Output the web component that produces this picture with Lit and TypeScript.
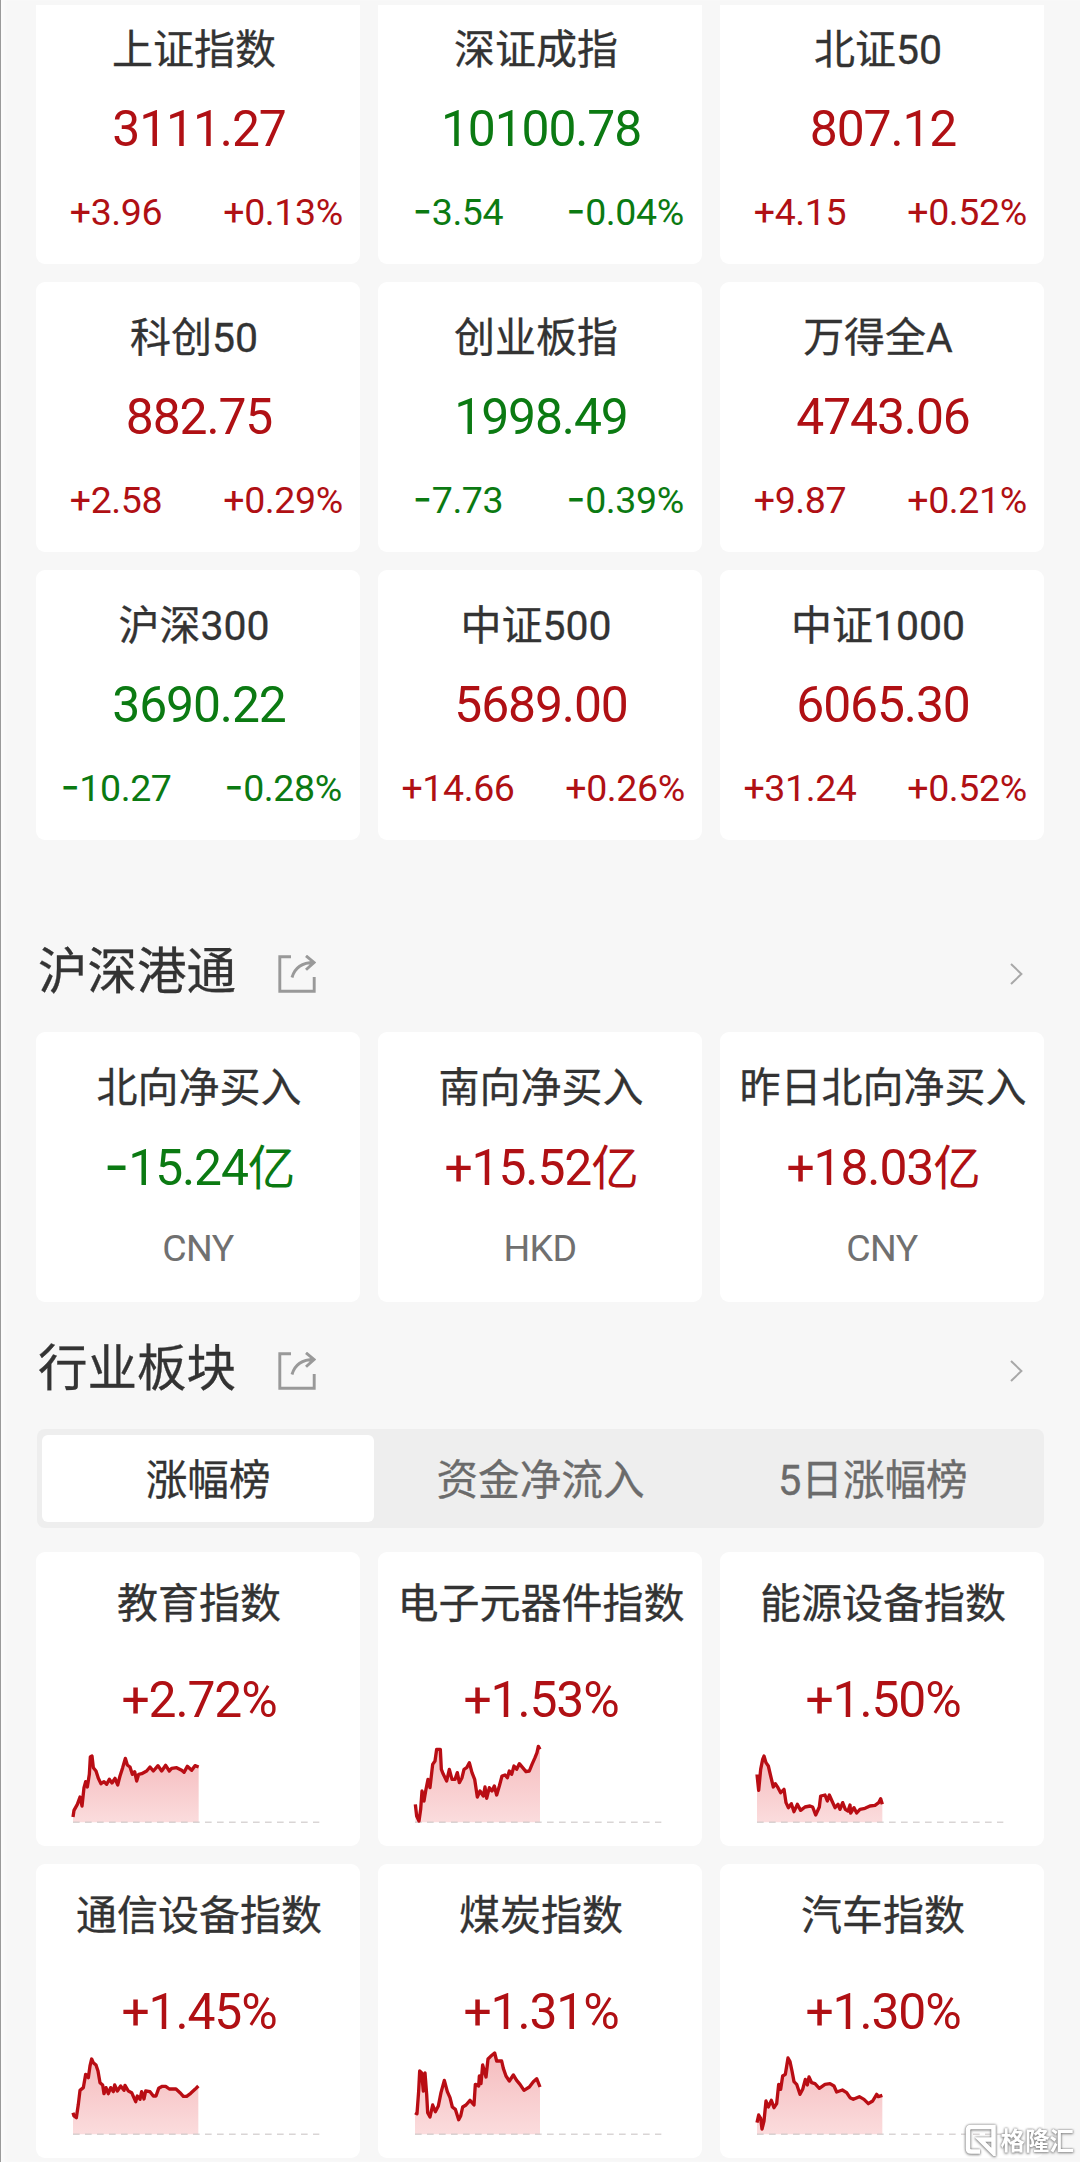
import { LitElement, html, svg, css } from "lit";
import { customElement, property } from "lit/decorators.js";

type Point = [number, number];

interface IndexQuote {
  name: string;
  value: string;
  change: string;
  percent: string;
  up: boolean;
}

interface Flow {
  name: string;
  value: string;
  currency: string;
}

interface Sector {
  name: string;
  percent: string;
  points: string;
}

const INDICES: IndexQuote[] = [
  { name: "上证指数", value: "3111.27", change: "+3.96", percent: "+0.13%", up: true },
  { name: "深证成指", value: "10100.78", change: "-3.54", percent: "-0.04%", up: false },
  { name: "北证50", value: "807.12", change: "+4.15", percent: "+0.52%", up: true },
  { name: "科创50", value: "882.75", change: "+2.58", percent: "+0.29%", up: true },
  { name: "创业板指", value: "1998.49", change: "-7.73", percent: "-0.39%", up: false },
  { name: "万得全A", value: "4743.06", change: "+9.87", percent: "+0.21%", up: true },
  { name: "沪深300", value: "3690.22", change: "-10.27", percent: "-0.28%", up: false },
  { name: "中证500", value: "5689.00", change: "+14.66", percent: "+0.26%", up: true },
  { name: "中证1000", value: "6065.30", change: "+31.24", percent: "+0.52%", up: true },
];

const FLOWS: Flow[] = [
  { name: "北向净买入", value: "-15.24亿", currency: "CNY" },
  { name: "南向净买入", value: "+15.52亿", currency: "HKD" },
  { name: "昨日北向净买入", value: "+18.03亿", currency: "CNY" },
];

// Sparkline samples, "x,y" in a 744 x 252 box whose zero line is at y = 244.
const SECTORS: Sector[] = [
  {
    name: "教育指数",
    percent: "+2.72%",
    points:
      "3,228 6,208 16,190 24,168 30,195 36,140 41,122 46,138 52,100 55,48 60,45 64,80 72,90 79,112 87,128 96,122 104,130 112,115 120,126 129,112 137,132 144,105 152,80 160,52 166,72 174,78 181,100 188,92 194,120 200,100 209,98 224,90 234,78 244,90 258,74 269,90 281,73 292,90 299,82 314,80 329,88 336,94 346,76 359,88 369,74 380,78",
  },
  {
    name: "电子元器件指数",
    percent: "+1.53%",
    points:
      "4,190 8,225 15,240 20,205 24,150 30,180 35,150 42,115 48,140 56,70 63,60 68,25 79,25 82,85 88,100 98,120 106,85 114,115 123,115 130,95 136,125 144,110 150,85 158,80 166,65 174,95 182,115 190,168 198,150 208,165 213,138 218,172 226,140 234,150 241,135 248,162 256,135 264,105 273,102 280,110 286,90 293,100 300,75 308,85 316,68 326,80 336,92 346,90 354,70 363,50 369,35 373,16 378,25",
  },
  {
    name: "能源设备指数",
    percent: "+1.50%",
    points:
      "3,100 8,148 14,85 20,55 24,45 30,65 37,75 44,105 52,138 58,128 66,140 74,155 84,145 90,185 97,200 106,188 114,212 124,190 134,208 147,198 162,195 170,198 179,222 190,198 194,165 207,162 214,180 220,162 228,180 237,200 246,190 252,205 260,185 268,205 276,210 282,192 284,216 294,200 302,216 312,205 327,202 342,195 357,193 368,185 374,173 379,190",
  },
  {
    name: "通信设备指数",
    percent: "+1.45%",
    points:
      "3,179 6,189 13,194 19,154 24,112 34,104 41,64 49,74 54,39 59,18 64,29 72,36 78,54 84,89 92,96 96,122 102,104 109,122 116,104 124,116 128,96 136,114 146,99 156,112 159,97 169,114 179,119 191,146 196,129 204,139 209,116 216,138 221,114 234,116 244,129 252,129 260,106 271,100 281,100 292,108 312,108 324,119 334,130 344,130 356,121 369,109 379,99",
  },
  {
    name: "煤炭指数",
    percent: "+1.31%",
    points:
      "3,179 9,182 14,114 17,54 23,60 28,114 33,60 38,124 41,179 48,192 56,156 64,176 73,159 81,119 91,82 100,116 108,134 115,162 124,169 134,200 140,189 146,162 156,156 168,142 180,156 184,94 194,99 196,69 201,92 206,36 216,72 222,18 230,10 242,0 248,24 263,24 268,46 276,69 286,84 298,66 308,82 318,94 330,112 346,102 358,86 368,77 378,102",
  },
  {
    name: "汽车指数",
    percent: "+1.30%",
    points:
      "3,209 8,186 14,196 18,228 24,204 30,144 37,162 46,142 54,164 62,152 68,94 74,109 80,69 88,64 96,15 102,26 108,54 114,86 122,94 132,124 140,109 148,79 154,96 159,72 167,89 177,92 190,106 207,94 222,92 234,99 242,117 259,111 272,119 282,134 292,139 310,131 324,139 337,152 350,144 362,124 367,131 379,127",
  },
];

const TABS = ["涨幅榜", "资金净流入", "5日涨幅榜"];

// A leading minus is set in a face whose dash is wide enough beside the digits.
const signed = (text: string) =>
  text.startsWith("-") ? html`<span class="minus">-</span>${text.slice(1)}` : text;

@customElement("spark-line")
export class SparkLine extends LitElement {
  @property() points = "";

  static styles = css`
    :host {
      display: block;
      width: 248px;
      height: 86px;
    }
    .plot {
      display: block;
      overflow: visible;
    }
  `;

  render() {
    const pts = this.points.split(" ").map((p) => p.split(",").map(Number) as Point);
    const last = pts[pts.length - 1][0];
    const area = `M${pts[0][0]} 244 L${pts.map((p) => p.join(" ")).join(" L")} L${last} 244 Z`;
    return html`<svg class="plot" width="248" height="84" viewBox="0 0 744 252">
      <defs>
        <linearGradient id="fade" x1="0" y1="0" x2="0" y2="1">
          <stop offset="0" stop-color="#f5bcbe" />
          <stop offset="1" stop-color="#fbdcdd" />
        </linearGradient>
      </defs>
      ${svg`<path d=${area} fill="url(#fade)" />`}
      <line x1="3" y1="243.5" x2="742" y2="243.5" stroke="#c6c0c0" stroke-width="3" stroke-dasharray="20 16" />
      ${svg`<polyline points=${this.points} fill="none" stroke="#b90d14" stroke-width="10" stroke-linejoin="round" />`}
    </svg>`;
  }
}

@customElement("app-root")
export class AppRoot extends LitElement {
  static styles = css`
    :host {
      display: block;
      font-family: Roboto, "Noto Sans CJK SC", sans-serif;
      color: #333;
    }
    .page {
      position: relative;
      box-sizing: border-box;
      width: 1080px;
      height: 2162px;
      padding: 5px 36px 0 34px;
      border-left: 1px solid #9a9a9a;
      box-shadow: inset 5px 0 4px -2px #fcfcfc;
      background: #f7f7f7;
      overflow: hidden;
    }
    .grid {
      display: grid;
      grid-template-columns: repeat(3, 324px);
      gap: 18px;
      margin-left: 1px;
    }
    .card {
      box-sizing: border-box;
      height: 270px;
      padding-top: 30px;
      border-radius: 9px;
      background: #fff;
      text-align: center;
      white-space: nowrap;
    }
    .card.cut {
      height: 259px;
      padding-top: 19px;
      border-radius: 0 0 9px 9px;
    }
    .name {
      padding-left: 2px;
      font-size: 41px;
      line-height: 53px;
      -webkit-text-stroke: 0.3px currentColor;
    }
    .quote .name {
      padding: 0 8px 0 0;
    }
    .value {
      margin-top: 22px;
      padding-left: 2px;
      font-size: 49.8px;
      line-height: 60px;
      letter-spacing: -1.1px;
    }
    .up {
      color: #b01014;
    }
    .down {
      color: #0b7a12;
    }
    .minus {
      font-family: Inter, sans-serif;
      font-size: 1.12em;
      line-height: 0;
    }
    .changes {
      display: grid;
      grid-template-columns: 160px 174px;
      margin-top: 28px;
      font-size: 37.5px;
      line-height: 50px;
      letter-spacing: -0.4px;
    }
    .currency {
      margin-top: 24px;
      font-size: 37.5px;
      line-height: 50px;
      letter-spacing: -0.6px;
      color: #707070;
    }
    .flow .value {
      margin-top: 23px;
    }
    .unit {
      font-size: 47.5px;
    }
    .heading {
      display: flex;
      align-items: center;
      height: 60px;
      margin: 102px 0 30px 3px;
      padding-right: 21px;
    }
    .heading.second {
      margin-top: 37px;
    }
    .title {
      font-size: 49.5px;
      line-height: 60px;
      -webkit-text-stroke: 0.3px currentColor;
    }
    .share {
      margin: 4px auto 0 42px;
    }
    .chevron {
      margin-top: 3px;
    }
    .tabs {
      display: grid;
      grid-template-columns: repeat(3, 1fr);
      box-sizing: border-box;
      height: 99px;
      margin: 0 0 24px 2px;
      padding: 6px 5px;
      border-radius: 8px;
      background: #eee;
    }
    .tab {
      height: 87px;
      border-radius: 6px;
      font-size: 41.6px;
      line-height: 91px;
      text-align: center;
      color: #6b6b6b;
      -webkit-text-stroke: 0.3px currentColor;
    }
    .tab.active {
      background: #fff;
      color: #333;
    }
    .sector {
      height: 294px;
      padding-top: 26px;
    }
    .sector .value {
      margin-top: 39px;
    }
    .sector spark-line {
      margin: 11px 0 0 36px;
    }
    .brand {
      position: absolute;
      right: 6px;
      bottom: 6px;
      display: flex;
      align-items: center;
      gap: 4px;
      filter: drop-shadow(0 0 1px #777) drop-shadow(0 1px 1px #aaa);
    }
    .brand-name {
      font-family: "Noto Sans CJK SC", sans-serif;
      font-size: 24.5px;
      font-weight: 700;
      line-height: 32px;
      color: #fff;
    }
  `;

  private heading(title: string, extra = "") {
    return html`<div class="heading ${extra}">
      <span class="title">${title}</span>
      <svg class="share" width="38" height="38" viewBox="0 0 38 38" fill="none" stroke="#999" stroke-width="2.9">
        <path d="M13 1.8H1.8V36.2H36.2V22" />
        <path d="M14 22.5C17 12 24 7.5 36 7.5M28 0.8L36 7.5L28 14.8" />
      </svg>
      <svg class="chevron" width="13" height="22" viewBox="0 0 13 22" fill="none" stroke="#a8a8a8" stroke-width="2">
        <path d="M1 1L11.4 11L1 21" />
      </svg>
    </div>`;
  }

  render() {
    return html`<div class="page">
      <div class="grid">
        ${INDICES.map((q, i) => {
          const tone = q.up ? "up" : "down";
          return html`<div class="card quote ${i < 3 ? "cut" : ""}">
            <div class="name">${q.name}</div>
            <div class="value ${tone}">${q.value}</div>
            <div class="changes ${tone}">
              <span>${signed(q.change)}</span>
              <span>${signed(q.percent)}</span>
            </div>
          </div>`;
        })}
      </div>
      ${this.heading("沪深港通")}
      <div class="grid">
        ${FLOWS.map(
          (f) => html`<div class="card flow">
            <div class="name">${f.name}</div>
            <div class="value ${f.value.startsWith("-") ? "down" : "up"}">
              ${signed(f.value.slice(0, -1))}<span class="unit">${f.value.slice(-1)}</span>
            </div>
            <div class="currency">${f.currency}</div>
          </div>`,
        )}
      </div>
      ${this.heading("行业板块", "second")}
      <div class="tabs">
        ${TABS.map((t, i) => html`<div class="tab ${i === 0 ? "active" : ""}">${t}</div>`)}
      </div>
      <div class="grid">
        ${SECTORS.map(
          (s) => html`<div class="card sector">
            <div class="name">${s.name}</div>
            <div class="value up">${s.percent}</div>
            <spark-line points=${s.points}></spark-line>
          </div>`,
        )}
      </div>
      <div class="brand">
        <svg width="32" height="32" viewBox="0 0 32 32" fill="none" stroke="#fff" stroke-width="4.5">
          <path d="M15 27.5H6Q3 27.5 3 24.500V6Q3 3 6 3H28.500V29L15 15.500H28" />
        </svg>
        <span class="brand-name">格隆汇</span>
      </div>
    </div>`;
  }
}
